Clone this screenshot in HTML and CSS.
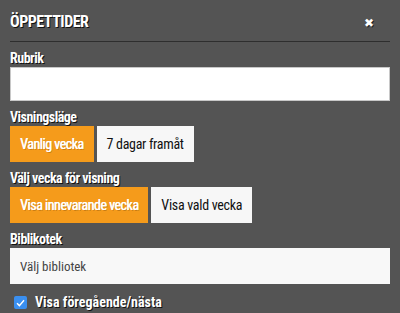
FILE: index.html
```html
<!DOCTYPE html>
<html lang="sv">
<head>
<meta charset="utf-8">
<title>Öppettider</title>
<link rel="stylesheet" href="styles.css">
</head>
<body>
<div class="panel">
  <div class="header">
    <h1 class="title">ÖPPETTIDER</h1>
    <span class="close">&#x2716;</span>
  </div>
  <div class="group">
    <label class="label">Rubrik</label>
    <div class="input"></div>
  </div>
  <div class="group">
    <label class="label">Visningsläge</label>
    <div class="btns">
      <span class="btn active">Vanlig vecka</span>
      <span class="btn">7 dagar framåt</span>
    </div>
  </div>
  <div class="group">
    <label class="label">Välj vecka för visning</label>
    <div class="btns">
      <span class="btn active">Visa innevarande vecka</span>
      <span class="btn">Visa vald vecka</span>
    </div>
  </div>
  <div class="group">
    <label class="label">Biblikotek</label>
    <div class="select">Välj bibliotek</div>
  </div>
  <div class="check-row">
    <span class="checkbox"><svg width="9" height="8" viewBox="0 0 9 8"><path d="M1 4.2 L3.4 6.6 L8 1.2" fill="none" stroke="#fff" stroke-width="1.4"/></svg></span>
    <span class="check-label">Visa föregående/nästa</span>
  </div>
</div>
</body>
</html>
```
FILE: styles.css
```css
html, body {
  margin: 0;
  padding: 0;
  background: #545454;
}
body {
  font-family: "Roboto Condensed", "Liberation Sans Narrow", "Roboto", sans-serif;
  color: #fff;
}
.panel {
  padding: 0 10px;
}
.header {
  height: 41px;
  border-bottom: 1px solid #2e2e2e;
  display: flex;
  align-items: center;
  justify-content: space-between;
}
.title {
  margin: 0;
  font-size: 16px;
  font-weight: bold;
  letter-spacing: -0.5px;
  text-shadow: 1px 1px 0 #111;
  line-height: 20px;
  padding-top: 3px;
}
.close {
  font-size: 12px;
  margin-right: 16px;
  padding-top: 5px;
  text-shadow: 1px 1px 0 #222;
}
.group {
  margin-top: 8px;
}
.label {
  display: block;
  font-size: 14px;
  font-weight: bold;
  letter-spacing: -0.5px;
  line-height: 17px;
  text-shadow: 1px 1px 0 #111;
}
.input {
  height: 32px;
  background: #fff;
  border: 1px solid #c8c8c8;
}
.btns {
  display: flex;
  gap: 3px;
}
.btn {
  height: 36px;
  line-height: 36px;
  padding: 0 10px;
  font-size: 14px;
  letter-spacing: -0.3px;
  background: #f7f7f7;
  color: #111;
}
.btn.active {
  background: #f59b1b;
  color: #fff;
  letter-spacing: -0.5px;
  text-shadow: 0.5px 0 0 #fff, 1px 1px 0 rgba(0,0,0,0.2);
}
.select {
  height: 36px;
  line-height: 38px;
  padding: 0 10px;
  background: #f8f8f8;
  color: #444;
  font-size: 13px;
}
.check-row {
  display: flex;
  align-items: center;
  gap: 8px;
  margin-top: 10px;
  padding-left: 4px;
}
.checkbox {
  width: 13px;
  height: 13px;
  border-radius: 2px;
  background: #3a8ff0;
  display: flex;
  align-items: center;
  justify-content: center;
}
.check-label {
  font-size: 14px;
  font-weight: bold;
  line-height: 17px;
  text-shadow: 1px 1px 0 #111;
}
```
